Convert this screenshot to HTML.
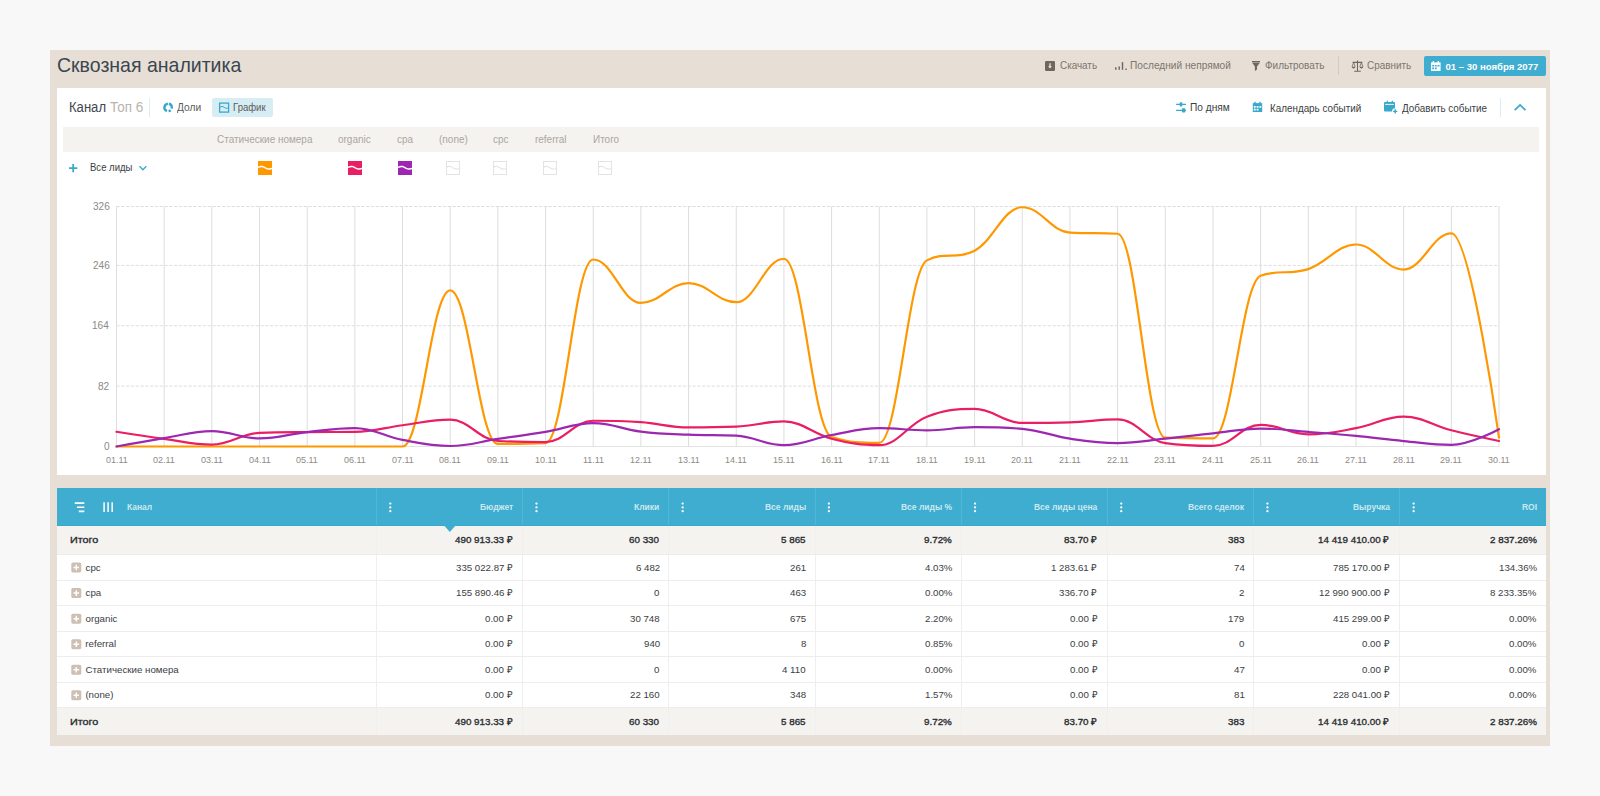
<!DOCTYPE html>
<html><head><meta charset="utf-8"><style>
html,body{margin:0;padding:0}
body{width:1600px;height:796px;background:#f8f8f8;position:relative;overflow:hidden;font-family:'Liberation Sans', sans-serif}
.t{position:absolute;white-space:nowrap}
.r{position:absolute}
</style></head><body>
<div class="r" style="left:50px;top:50px;width:1500.00px;height:695.50px;background:#e7dfd6;"></div>
<div class="t" style="left:56.77px;top:55.70px;font-size:19.767px;line-height:19.767px;color:#3b4651;font-weight:400;transform:scaleX(0.9875);transform-origin:0 0;">Сквозная аналитика</div>
<svg class="r" style="left:1045px;top:61px" width="11" height="11" viewBox="0 0 11 11"><g transform="translate(0.000 0.000)"><rect x="0" y="0" width="10" height="10" rx="1.3" fill="#6f675f"/><path d="M5 2.3v4" stroke="#e7dfd6" stroke-width="1.4"/><path d="M2.9 5.3L5 7.6L7.1 5.3z" fill="#e7dfd6"/></g></svg>
<div class="t" style="left:1059.51px;top:60.98px;font-size:10.029px;line-height:10.029px;color:#7d756e;font-weight:400;transform:scaleX(0.9862);transform-origin:0 0;">Скачать</div>
<svg class="r" style="left:1114px;top:61px" width="15" height="11" viewBox="0 0 15 11"><g transform="translate(0.000 0.000)"><rect x="1.1" y="6.2" width="1.4" height="2.6" fill="#6f675f"/><rect x="4.5" y="5.4" width="1.4" height="3.4" fill="#6f675f"/><rect x="7.8" y="1.1" width="1.4" height="7.7" fill="#6f675f"/><rect x="11.2" y="7.6" width="1.7" height="1.2" fill="#6f675f"/></g></svg>
<div class="t" style="left:1130.19px;top:60.98px;font-size:10.029px;line-height:10.029px;color:#7d756e;font-weight:400;transform:scaleX(1.0111);transform-origin:0 0;">Последний непрямой</div>
<svg class="r" style="left:1251px;top:60px" width="11" height="13" viewBox="0 0 11 13"><g transform="translate(0.000 0.000)"><rect x="1" y="1" width="8" height="1.1" fill="#6f675f"/><path d="M1 2.6H9L6 6.4V9.5L3.9 11V6.4z" fill="#6f675f"/></g></svg>
<div class="t" style="left:1265.22px;top:60.98px;font-size:10.029px;line-height:10.029px;color:#7d756e;font-weight:400;transform:scaleX(0.9971);transform-origin:0 0;">Фильтровать</div>
<div class="r" style="left:1338px;top:56px;width:1.00px;height:19.00px;background:#d6cabe;"></div>
<svg class="r" style="left:1351px;top:60px" width="14" height="13" viewBox="0 0 14 13"><g transform="translate(0.000 0.000)"><path d="M6.5 0.6v10.2M3.2 11.2h6.6M1.6 2.4h9.8" stroke="#6f675f" stroke-width="1.1" fill="none"/><path d="M2.6 2.6L1 6.8M2.6 2.6L4.2 6.8M10.4 2.6L8.8 6.8M10.4 2.6L12 6.8" stroke="#6f675f" stroke-width="0.8" fill="none"/><path d="M0.8 6.8h3.6a1.8 1.7 0 0 1-3.6 0zM8.6 6.8h3.6a1.8 1.7 0 0 1-3.6 0z" fill="#6f675f"/></g></svg>
<div class="t" style="left:1366.50px;top:60.98px;font-size:10.029px;line-height:10.029px;color:#7d756e;font-weight:400;transform:scaleX(0.9891);transform-origin:0 0;">Сравнить</div>
<div class="r" style="left:1424px;top:56px;width:122.00px;height:19.50px;background:#3eadcf;border-radius:2px;"></div>
<svg class="r" style="left:1431px;top:61px" width="11" height="11" viewBox="0 0 11 11"><g transform="translate(0.000 0.000)"><path d="M0 1.4h9.6V10H0z" fill="#fff"/><path d="M2.3 0v2.4M7.3 0v2.4" stroke="#fff" stroke-width="1.3"/><path d="M1.2 3.9h2v1.7h-2zM4 3.9h1.7v1.7H4zM6.5 3.9h2v1.7h-2zM1.2 6.6h2v1.7h-2zM4 6.6h1.7v1.7H4z" fill="#3eadcf"/></g></svg>
<div class="t" style="left:1445.42px;top:62.35px;font-size:9.593px;line-height:9.593px;color:#ffffff;font-weight:700;">01 – 30 ноября 2077</div>
<div class="r" style="left:57px;top:88px;width:1489.00px;height:387.00px;background:#ffffff;"></div>
<div class="t" style="left:69.22px;top:100.64px;font-size:13.953px;line-height:13.953px;color:#3f4750;font-weight:400;transform:scaleX(0.9386);transform-origin:0 0;">Канал</div>
<div class="t" style="left:109.90px;top:100.64px;font-size:13.953px;line-height:13.953px;color:#b8b3ae;font-weight:400;transform:scaleX(0.9655);transform-origin:0 0;">Топ 6</div>
<div class="r" style="left:149px;top:98px;width:1.00px;height:19.00px;background:#dbedf3;"></div>
<svg class="r" style="left:162px;top:102px" width="13" height="12" viewBox="0 0 13 12"><g transform="translate(0.500 0.000)"><circle cx="5.6" cy="5.4" r="3.7" stroke="#3aa9c9" stroke-width="2.4" fill="none" stroke-dasharray="6.15 1.6 2.28 1.6 10.03 1.6" stroke-dashoffset="-0.8" transform="rotate(-90 5.6 5.4)"/></g></svg>
<div class="t" style="left:177.42px;top:101.74px;font-size:11.483px;line-height:11.483px;color:#5b5b5b;font-weight:400;transform:scaleX(0.8899);transform-origin:0 0;">Доли</div>
<div class="r" style="left:212px;top:98px;width:60.50px;height:18.70px;background:#d7edf4;border-radius:2px;"></div>
<svg class="r" style="left:218px;top:102px" width="13" height="12" viewBox="0 0 13 12"><g transform="translate(0.500 0.000)"><rect x="1.1" y="1.1" width="9" height="9" stroke="#3aa9c9" stroke-width="1.3" fill="none"/><path d="M1.4 5.5C3 4 4.2 4.3 5.6 5.3S8.5 6.8 9.8 5.6" stroke="#3aa9c9" stroke-width="1" fill="none"/></g></svg>
<div class="t" style="left:232.61px;top:101.74px;font-size:11.483px;line-height:11.483px;color:#5b5b5b;font-weight:400;transform:scaleX(0.8318);transform-origin:0 0;">График</div>
<svg class="r" style="left:1175px;top:102px" width="13" height="12" viewBox="0 0 13 12"><g transform="translate(0.500 0.000)"><path d="M0.6 2.4h10M0.6 8.4h10" stroke="#3aa9c9" stroke-width="1.1"/><rect x="4.2" y="0.3" width="2.6" height="4.2" rx="0.8" fill="#3aa9c9"/><rect x="6.4" y="6.3" width="3.4" height="4.2" rx="0.8" fill="#3aa9c9"/></g></svg>
<div class="t" style="left:1189.79px;top:101.86px;font-size:11.337px;line-height:11.337px;color:#3a3e42;font-weight:400;transform:scaleX(0.8943);transform-origin:0 0;">По дням</div>
<svg class="r" style="left:1252px;top:101px" width="12" height="13" viewBox="0 0 12 13"><g transform="translate(0.500 0.500)"><path d="M0.3 1.6h9.4V10.5H0.3z" fill="#3aa9c9"/><path d="M2.5 0.2v2.6M7.5 0.2v2.6" stroke="#3aa9c9" stroke-width="1.4"/><path d="M1.3 4.4h1.9v1.8H1.3zM4.1 4.4h1.9v1.8H4.1zM6.9 4.4h1.9v1.8H6.9zM1.3 7.3h1.9v1.8H1.3zM4.1 7.3h1.9v1.8H4.1z" fill="#fff"/></g></svg>
<div class="t" style="left:1270.19px;top:102.86px;font-size:11.337px;line-height:11.337px;color:#3a3e42;font-weight:400;transform:scaleX(0.8697);transform-origin:0 0;">Календарь событий</div>
<svg class="r" style="left:1383px;top:100px" width="17" height="16" viewBox="0 0 17 16"><g transform="translate(0.500 0.500)"><rect x="0.5" y="1.6" width="11" height="9.5" rx="1" fill="#3aa9c9"/><path d="M3.8 0.3v2.4M8.8 0.3v2.4" stroke="#3aa9c9" stroke-width="1.3"/><path d="M1.6 3.9h8.8" stroke="#fff" stroke-width="0.9"/><circle cx="11.7" cy="10.9" r="3.1" fill="#fff"/><path d="M11.7 8.8v4.2M9.6 10.9h4.2" stroke="#3aa9c9" stroke-width="1.4"/></g></svg>
<div class="t" style="left:1402.33px;top:102.74px;font-size:11.483px;line-height:11.483px;color:#3a3e42;font-weight:400;transform:scaleX(0.8590);transform-origin:0 0;">Добавить событие</div>
<div class="r" style="left:1500px;top:98px;width:1.00px;height:18.50px;background:#dbedf3;"></div>
<svg class="r" style="left:1513px;top:102px" width="15" height="11" viewBox="0 0 15 11"><g transform="translate(0.000 0.000)"><path d="M1.7 8.2L7.1 2.9L12.5 8.2" stroke="#3aa9c9" stroke-width="1.8" fill="none"/></g></svg>
<div class="r" style="left:63px;top:127px;width:1476.00px;height:25.00px;background:#f5f3ef;"></div>
<div class="t" style="left:217.00px;top:134.23px;font-size:10.901px;line-height:10.901px;color:#aaa6a1;font-weight:400;transform:scaleX(0.9135);transform-origin:0 0;">Статические номера</div>
<div class="t" style="left:338.49px;top:134.23px;font-size:10.901px;line-height:10.901px;color:#aaa6a1;font-weight:400;transform:scaleX(0.9135);transform-origin:0 0;">organic</div>
<div class="t" style="left:397.07px;top:134.23px;font-size:10.901px;line-height:10.901px;color:#aaa6a1;font-weight:400;transform:scaleX(0.9135);transform-origin:0 0;">cpa</div>
<div class="t" style="left:438.96px;top:134.23px;font-size:10.901px;line-height:10.901px;color:#aaa6a1;font-weight:400;transform:scaleX(0.9135);transform-origin:0 0;">(none)</div>
<div class="t" style="left:492.93px;top:134.23px;font-size:10.901px;line-height:10.901px;color:#aaa6a1;font-weight:400;transform:scaleX(0.9135);transform-origin:0 0;">cpc</div>
<div class="t" style="left:534.88px;top:134.23px;font-size:10.901px;line-height:10.901px;color:#aaa6a1;font-weight:400;transform:scaleX(0.9135);transform-origin:0 0;">referral</div>
<div class="t" style="left:592.64px;top:134.23px;font-size:10.901px;line-height:10.901px;color:#aaa6a1;font-weight:400;transform:scaleX(0.9135);transform-origin:0 0;">Итого</div>
<svg class="r" style="left:258px;top:161px" width="15" height="15" viewBox="0 0 15 15"><g transform="translate(0.000 0.000)"><rect width="14" height="14" fill="#ff9800"/><path d="M0 6.3C1.5 5.6 3 5.3 4.3 5.5C6.5 5.9 7.8 8.1 10.3 8.1C11.8 8.1 13 7.7 14 7.4" stroke="#fff" stroke-width="1.5" fill="none"/></g></svg>
<svg class="r" style="left:348px;top:161px" width="15" height="15" viewBox="0 0 15 15"><g transform="translate(0.000 0.000)"><rect width="14" height="14" fill="#e91e63"/><path d="M0 6.3C1.5 5.6 3 5.3 4.3 5.5C6.5 5.9 7.8 8.1 10.3 8.1C11.8 8.1 13 7.7 14 7.4" stroke="#fff" stroke-width="1.5" fill="none"/></g></svg>
<svg class="r" style="left:398px;top:161px" width="15" height="15" viewBox="0 0 15 15"><g transform="translate(0.000 0.000)"><rect width="14" height="14" fill="#9c27b0"/><path d="M0 6.3C1.5 5.6 3 5.3 4.3 5.5C6.5 5.9 7.8 8.1 10.3 8.1C11.8 8.1 13 7.7 14 7.4" stroke="#fff" stroke-width="1.5" fill="none"/></g></svg>
<svg class="r" style="left:446px;top:161px" width="15" height="15" viewBox="0 0 15 15"><g transform="translate(0.000 0.000)"><rect x="0.5" y="0.5" width="13" height="13" fill="none" stroke="#e3e3e3" stroke-width="1"/><path d="M0.5 6.3C1.5 5.6 3 5.3 4.3 5.5C6.5 5.9 7.8 8.1 10.3 8.1C11.8 8.1 13 7.7 13.5 7.4" stroke="#e3e3e3" stroke-width="1.1" fill="none"/></g></svg>
<svg class="r" style="left:493px;top:161px" width="15" height="15" viewBox="0 0 15 15"><g transform="translate(0.000 0.000)"><rect x="0.5" y="0.5" width="13" height="13" fill="none" stroke="#e3e3e3" stroke-width="1"/><path d="M0.5 6.3C1.5 5.6 3 5.3 4.3 5.5C6.5 5.9 7.8 8.1 10.3 8.1C11.8 8.1 13 7.7 13.5 7.4" stroke="#e3e3e3" stroke-width="1.1" fill="none"/></g></svg>
<svg class="r" style="left:543px;top:161px" width="15" height="15" viewBox="0 0 15 15"><g transform="translate(0.000 0.000)"><rect x="0.5" y="0.5" width="13" height="13" fill="none" stroke="#e3e3e3" stroke-width="1"/><path d="M0.5 6.3C1.5 5.6 3 5.3 4.3 5.5C6.5 5.9 7.8 8.1 10.3 8.1C11.8 8.1 13 7.7 13.5 7.4" stroke="#e3e3e3" stroke-width="1.1" fill="none"/></g></svg>
<svg class="r" style="left:598px;top:161px" width="15" height="15" viewBox="0 0 15 15"><g transform="translate(0.000 0.000)"><rect x="0.5" y="0.5" width="13" height="13" fill="none" stroke="#e3e3e3" stroke-width="1"/><path d="M0.5 6.3C1.5 5.6 3 5.3 4.3 5.5C6.5 5.9 7.8 8.1 10.3 8.1C11.8 8.1 13 7.7 13.5 7.4" stroke="#e3e3e3" stroke-width="1.1" fill="none"/></g></svg>
<svg class="r" style="left:69px;top:164px" width="10" height="10" viewBox="0 0 10 10"><g transform="translate(0.000 0.000)"><path d="M4.2 0v8.3M0 4.15h8.3" stroke="#3aa9c9" stroke-width="1.8"/></g></svg>
<div class="t" style="left:90.21px;top:162.36px;font-size:10.756px;line-height:10.756px;color:#3a3e42;font-weight:400;transform:scaleX(0.8875);transform-origin:0 0;">Все лиды</div>
<svg class="r" style="left:138px;top:165px" width="11" height="8" viewBox="0 0 11 8"><g transform="translate(0.500 0.300)"><path d="M1 1L4.4 4.4L7.8 1" stroke="#3aa9c9" stroke-width="1.4" fill="none"/></g></svg>
<svg class="r" style="left:0;top:0" width="1600" height="796" viewBox="0 0 1600 796"><path d="M116.5 206.50H1499.5" stroke="#dedede" stroke-width="1" stroke-dasharray="3.2 1.6"/><path d="M116.5 265.40H1499.5" stroke="#dedede" stroke-width="1" stroke-dasharray="3.2 1.6"/><path d="M116.5 325.76H1499.5" stroke="#dedede" stroke-width="1" stroke-dasharray="3.2 1.6"/><path d="M116.5 386.13H1499.5" stroke="#dedede" stroke-width="1" stroke-dasharray="3.2 1.6"/><path d="M116.50 206.50V446.00" stroke="#dddddd" stroke-width="1"/><path d="M164.17 206.50V446.00" stroke="#dddddd" stroke-width="1"/><path d="M211.84 206.50V446.00" stroke="#dddddd" stroke-width="1"/><path d="M259.52 206.50V446.00" stroke="#dddddd" stroke-width="1"/><path d="M307.19 206.50V446.00" stroke="#dddddd" stroke-width="1"/><path d="M354.86 206.50V446.00" stroke="#dddddd" stroke-width="1"/><path d="M402.53 206.50V446.00" stroke="#dddddd" stroke-width="1"/><path d="M450.21 206.50V446.00" stroke="#dddddd" stroke-width="1"/><path d="M497.88 206.50V446.00" stroke="#dddddd" stroke-width="1"/><path d="M545.55 206.50V446.00" stroke="#dddddd" stroke-width="1"/><path d="M593.22 206.50V446.00" stroke="#dddddd" stroke-width="1"/><path d="M640.90 206.50V446.00" stroke="#dddddd" stroke-width="1"/><path d="M688.57 206.50V446.00" stroke="#dddddd" stroke-width="1"/><path d="M736.24 206.50V446.00" stroke="#dddddd" stroke-width="1"/><path d="M783.91 206.50V446.00" stroke="#dddddd" stroke-width="1"/><path d="M831.59 206.50V446.00" stroke="#dddddd" stroke-width="1"/><path d="M879.26 206.50V446.00" stroke="#dddddd" stroke-width="1"/><path d="M926.93 206.50V446.00" stroke="#dddddd" stroke-width="1"/><path d="M974.60 206.50V446.00" stroke="#dddddd" stroke-width="1"/><path d="M1022.28 206.50V446.00" stroke="#dddddd" stroke-width="1"/><path d="M1069.95 206.50V446.00" stroke="#dddddd" stroke-width="1"/><path d="M1117.62 206.50V446.00" stroke="#dddddd" stroke-width="1"/><path d="M1165.29 206.50V446.00" stroke="#dddddd" stroke-width="1"/><path d="M1212.97 206.50V446.00" stroke="#dddddd" stroke-width="1"/><path d="M1260.64 206.50V446.00" stroke="#dddddd" stroke-width="1"/><path d="M1308.31 206.50V446.00" stroke="#dddddd" stroke-width="1"/><path d="M1355.98 206.50V446.00" stroke="#dddddd" stroke-width="1"/><path d="M1403.66 206.50V446.00" stroke="#dddddd" stroke-width="1"/><path d="M1451.33 206.50V446.00" stroke="#dddddd" stroke-width="1"/><path d="M1499.00 206.50V446.00" stroke="#dddddd" stroke-width="1"/><path d="M116 446.5H1499.5" stroke="#e3e3e3" stroke-width="1"/></svg>
<div class="t" style="left:92.52px;top:201.11px;font-size:11.047px;line-height:11.047px;color:#8e8984;font-weight:400;transform:scaleX(0.9124);transform-origin:0 0;">326</div>
<div class="t" style="left:92.52px;top:260.11px;font-size:11.047px;line-height:11.047px;color:#8e8984;font-weight:400;transform:scaleX(0.9124);transform-origin:0 0;">246</div>
<div class="t" style="left:92.37px;top:320.11px;font-size:11.047px;line-height:11.047px;color:#8e8984;font-weight:400;transform:scaleX(0.9124);transform-origin:0 0;">164</div>
<div class="t" style="left:98.22px;top:381.11px;font-size:11.047px;line-height:11.047px;color:#8e8984;font-weight:400;transform:scaleX(0.9124);transform-origin:0 0;">82</div>
<div class="t" style="left:103.68px;top:441.11px;font-size:11.047px;line-height:11.047px;color:#8e8984;font-weight:400;transform:scaleX(0.9124);transform-origin:0 0;">0</div>
<div class="t" style="left:105.64px;top:455.16px;font-size:9.811px;line-height:9.811px;color:#8e8984;font-weight:400;transform:scaleX(0.9147);transform-origin:0 0;">01.11</div>
<div class="t" style="left:153.31px;top:455.16px;font-size:9.811px;line-height:9.811px;color:#8e8984;font-weight:400;transform:scaleX(0.9147);transform-origin:0 0;">02.11</div>
<div class="t" style="left:200.99px;top:455.16px;font-size:9.811px;line-height:9.811px;color:#8e8984;font-weight:400;transform:scaleX(0.9147);transform-origin:0 0;">03.11</div>
<div class="t" style="left:248.66px;top:455.16px;font-size:9.811px;line-height:9.811px;color:#8e8984;font-weight:400;transform:scaleX(0.9147);transform-origin:0 0;">04.11</div>
<div class="t" style="left:296.33px;top:455.16px;font-size:9.811px;line-height:9.811px;color:#8e8984;font-weight:400;transform:scaleX(0.9147);transform-origin:0 0;">05.11</div>
<div class="t" style="left:344.00px;top:455.16px;font-size:9.811px;line-height:9.811px;color:#8e8984;font-weight:400;transform:scaleX(0.9147);transform-origin:0 0;">06.11</div>
<div class="t" style="left:391.68px;top:455.16px;font-size:9.811px;line-height:9.811px;color:#8e8984;font-weight:400;transform:scaleX(0.9147);transform-origin:0 0;">07.11</div>
<div class="t" style="left:439.35px;top:455.16px;font-size:9.811px;line-height:9.811px;color:#8e8984;font-weight:400;transform:scaleX(0.9147);transform-origin:0 0;">08.11</div>
<div class="t" style="left:487.02px;top:455.16px;font-size:9.811px;line-height:9.811px;color:#8e8984;font-weight:400;transform:scaleX(0.9147);transform-origin:0 0;">09.11</div>
<div class="t" style="left:534.54px;top:455.16px;font-size:9.811px;line-height:9.811px;color:#8e8984;font-weight:400;transform:scaleX(0.9147);transform-origin:0 0;">10.11</div>
<div class="t" style="left:582.54px;top:455.16px;font-size:9.811px;line-height:9.811px;color:#8e8984;font-weight:400;transform:scaleX(0.9147);transform-origin:0 0;">11.11</div>
<div class="t" style="left:629.88px;top:455.16px;font-size:9.811px;line-height:9.811px;color:#8e8984;font-weight:400;transform:scaleX(0.9147);transform-origin:0 0;">12.11</div>
<div class="t" style="left:677.55px;top:455.16px;font-size:9.811px;line-height:9.811px;color:#8e8984;font-weight:400;transform:scaleX(0.9147);transform-origin:0 0;">13.11</div>
<div class="t" style="left:725.23px;top:455.16px;font-size:9.811px;line-height:9.811px;color:#8e8984;font-weight:400;transform:scaleX(0.9147);transform-origin:0 0;">14.11</div>
<div class="t" style="left:772.90px;top:455.16px;font-size:9.811px;line-height:9.811px;color:#8e8984;font-weight:400;transform:scaleX(0.9147);transform-origin:0 0;">15.11</div>
<div class="t" style="left:820.57px;top:455.16px;font-size:9.811px;line-height:9.811px;color:#8e8984;font-weight:400;transform:scaleX(0.9147);transform-origin:0 0;">16.11</div>
<div class="t" style="left:868.24px;top:455.16px;font-size:9.811px;line-height:9.811px;color:#8e8984;font-weight:400;transform:scaleX(0.9147);transform-origin:0 0;">17.11</div>
<div class="t" style="left:915.92px;top:455.16px;font-size:9.811px;line-height:9.811px;color:#8e8984;font-weight:400;transform:scaleX(0.9147);transform-origin:0 0;">18.11</div>
<div class="t" style="left:963.59px;top:455.16px;font-size:9.811px;line-height:9.811px;color:#8e8984;font-weight:400;transform:scaleX(0.9147);transform-origin:0 0;">19.11</div>
<div class="t" style="left:1011.37px;top:455.16px;font-size:9.811px;line-height:9.811px;color:#8e8984;font-weight:400;transform:scaleX(0.9147);transform-origin:0 0;">20.11</div>
<div class="t" style="left:1059.04px;top:455.16px;font-size:9.811px;line-height:9.811px;color:#8e8984;font-weight:400;transform:scaleX(0.9147);transform-origin:0 0;">21.11</div>
<div class="t" style="left:1106.72px;top:455.16px;font-size:9.811px;line-height:9.811px;color:#8e8984;font-weight:400;transform:scaleX(0.9147);transform-origin:0 0;">22.11</div>
<div class="t" style="left:1154.39px;top:455.16px;font-size:9.811px;line-height:9.811px;color:#8e8984;font-weight:400;transform:scaleX(0.9147);transform-origin:0 0;">23.11</div>
<div class="t" style="left:1202.06px;top:455.16px;font-size:9.811px;line-height:9.811px;color:#8e8984;font-weight:400;transform:scaleX(0.9147);transform-origin:0 0;">24.11</div>
<div class="t" style="left:1249.73px;top:455.16px;font-size:9.811px;line-height:9.811px;color:#8e8984;font-weight:400;transform:scaleX(0.9147);transform-origin:0 0;">25.11</div>
<div class="t" style="left:1297.41px;top:455.16px;font-size:9.811px;line-height:9.811px;color:#8e8984;font-weight:400;transform:scaleX(0.9147);transform-origin:0 0;">26.11</div>
<div class="t" style="left:1345.08px;top:455.16px;font-size:9.811px;line-height:9.811px;color:#8e8984;font-weight:400;transform:scaleX(0.9147);transform-origin:0 0;">27.11</div>
<div class="t" style="left:1392.75px;top:455.16px;font-size:9.811px;line-height:9.811px;color:#8e8984;font-weight:400;transform:scaleX(0.9147);transform-origin:0 0;">28.11</div>
<div class="t" style="left:1440.42px;top:455.16px;font-size:9.811px;line-height:9.811px;color:#8e8984;font-weight:400;transform:scaleX(0.9147);transform-origin:0 0;">29.11</div>
<div class="t" style="left:1488.15px;top:455.16px;font-size:9.811px;line-height:9.811px;color:#8e8984;font-weight:400;transform:scaleX(0.9147);transform-origin:0 0;">30.11</div>
<svg class="r" style="left:0;top:0" width="1600" height="796" viewBox="0 0 1600 796"><path d="M116.50 446.50 C116.50 446.50 145.10 446.50 164.17 446.50 C183.24 446.50 192.78 446.50 211.84 446.50 C230.91 446.50 240.45 446.50 259.52 446.50 C278.59 446.50 288.12 446.50 307.19 446.50 C326.26 446.50 335.79 446.50 354.86 446.50 C373.93 446.50 383.47 446.50 402.53 446.50 C421.60 446.50 431.14 290.43 450.21 290.43 C469.28 290.43 478.81 443.92 497.88 443.92 C516.95 443.92 526.48 443.92 545.55 443.11 C564.62 442.30 574.16 259.51 593.22 259.51 C612.29 259.51 621.83 302.94 640.90 302.94 C659.97 302.94 669.50 283.06 688.57 283.06 C707.64 283.06 717.17 302.21 736.24 302.21 C755.31 302.21 764.84 258.77 783.91 258.77 C802.98 258.77 812.52 431.04 831.59 436.93 C850.66 442.82 860.19 442.82 879.26 442.82 C898.33 442.82 907.86 270.11 926.93 260.39 C946.00 250.67 955.53 260.39 974.60 250.67 C993.67 240.95 1003.21 207.24 1022.28 207.24 C1041.34 207.24 1050.88 231.53 1069.95 232.63 C1089.02 233.74 1098.55 232.63 1117.62 233.74 C1136.69 234.84 1146.22 436.93 1165.29 437.67 C1184.36 438.40 1193.90 438.40 1212.97 438.40 C1232.03 438.40 1241.57 282.33 1260.64 275.70 C1279.71 269.08 1289.24 275.32 1308.31 269.08 C1327.38 262.83 1336.91 244.49 1355.98 244.49 C1375.05 244.49 1384.59 269.59 1403.66 269.59 C1422.72 269.59 1432.26 233.30 1451.33 233.30 C1470.40 233.30 1499.00 437.67 1499.00 437.67" stroke="#ff9800" stroke-width="2.2" fill="none" stroke-linejoin="round" stroke-linecap="round"/><path d="M116.50 431.78 C116.50 431.78 145.10 436.34 164.17 438.92 C183.24 441.49 192.78 444.66 211.84 444.66 C230.91 444.66 240.45 433.69 259.52 432.88 C278.59 432.07 288.12 432.22 307.19 432.07 C326.26 431.92 335.79 432.07 354.86 431.92 C373.93 431.78 383.47 427.67 402.53 425.22 C421.60 422.78 431.14 419.70 450.21 419.70 C469.28 419.70 478.81 439.87 497.88 440.98 C516.95 442.08 526.48 442.08 545.55 442.08 C564.62 442.08 574.16 420.73 593.22 420.73 C612.29 420.73 621.83 420.88 640.90 422.21 C659.97 423.53 669.50 427.36 688.57 427.36 C707.64 427.36 717.17 427.36 736.24 426.62 C755.31 425.89 764.84 421.47 783.91 421.47 C802.98 421.47 812.52 433.96 831.59 438.70 C850.66 443.44 860.19 445.17 879.26 445.17 C898.33 445.17 907.86 423.93 926.93 416.68 C946.00 409.44 955.53 408.95 974.60 408.95 C993.67 408.95 1003.21 422.94 1022.28 422.94 C1041.34 422.94 1050.88 422.94 1069.95 422.43 C1089.02 421.91 1098.55 419.41 1117.62 419.41 C1136.69 419.41 1146.22 440.32 1165.29 443.11 C1184.36 445.91 1193.90 445.91 1212.97 445.91 C1232.03 445.91 1241.57 424.78 1260.64 424.78 C1279.71 424.78 1289.24 434.35 1308.31 434.35 C1327.38 434.35 1336.91 431.70 1355.98 428.17 C1375.05 424.63 1384.59 416.68 1403.66 416.68 C1422.72 416.68 1432.26 425.44 1451.33 430.30 C1470.40 435.16 1499.00 440.98 1499.00 440.98" stroke="#e91e63" stroke-width="2.2" fill="none" stroke-linejoin="round" stroke-linecap="round"/><path d="M116.50 446.50 C116.50 446.50 145.10 441.20 164.17 438.11 C183.24 435.02 192.78 431.04 211.84 431.04 C230.91 431.04 240.45 438.40 259.52 438.40 C278.59 438.40 288.12 434.13 307.19 432.07 C326.26 430.01 335.79 428.10 354.86 428.10 C373.93 428.10 383.47 436.37 402.53 439.95 C421.60 443.53 431.14 445.98 450.21 445.98 C469.28 445.98 478.81 441.73 497.88 438.92 C516.95 436.10 526.48 435.09 545.55 431.92 C564.62 428.76 574.16 423.09 593.22 423.09 C612.29 423.09 621.83 429.23 640.90 431.56 C659.97 433.88 669.50 433.90 688.57 434.72 C707.64 435.55 717.17 434.72 736.24 435.68 C755.31 436.63 764.84 445.17 783.91 445.17 C802.98 445.17 812.52 438.42 831.59 435.02 C850.66 431.61 860.19 428.17 879.26 428.17 C898.33 428.17 907.86 430.30 926.93 430.30 C946.00 430.30 955.53 427.21 974.60 427.21 C993.67 427.21 1003.21 427.21 1022.28 428.83 C1041.34 430.45 1050.88 435.84 1069.95 438.70 C1089.02 441.55 1098.55 443.11 1117.62 443.11 C1136.69 443.11 1146.22 440.65 1165.29 438.70 C1184.36 436.74 1193.90 435.35 1212.97 433.32 C1232.03 431.29 1241.57 428.54 1260.64 428.54 C1279.71 428.54 1289.24 430.44 1308.31 431.92 C1327.38 433.41 1336.91 434.15 1355.98 435.97 C1375.05 437.80 1384.59 439.29 1403.66 441.05 C1422.72 442.82 1432.26 444.81 1451.33 444.81 C1470.40 444.81 1499.00 429.20 1499.00 429.20" stroke="#9c27b0" stroke-width="2.2" fill="none" stroke-linejoin="round" stroke-linecap="round"/></svg>
<div class="r" style="left:57px;top:488px;width:1489.00px;height:38.00px;background:#3eadcf;"></div>
<div class="r" style="left:57px;top:525px;width:1489.00px;height:1.00px;background:#36aacd;"></div>
<div class="t" style="left:127.23px;top:502.35px;font-size:9.593px;line-height:9.593px;color:#cbe8f1;font-weight:700;transform:scaleX(0.8854);transform-origin:0 0;">Канал</div>
<div class="r" style="left:376.0px;top:488px;width:1.00px;height:37.00px;background:#52b7d4;"></div>
<svg class="r" style="left:388px;top:502px" width="5" height="12" viewBox="0 0 5 12"><g transform="translate(0.800 0.000)"><circle cx="1.5" cy="1.6" r="1.15" fill="#fff"/><circle cx="1.5" cy="5.4" r="1.15" fill="#fff"/><circle cx="1.5" cy="9.2" r="1.15" fill="#fff"/></g></svg>
<div class="t" style="left:479.81px;top:502.35px;font-size:9.593px;line-height:9.593px;color:#cbe8f1;font-weight:700;transform:scaleX(0.8854);transform-origin:0 0;">Бюджет</div>
<div class="r" style="left:522.19px;top:488px;width:1.00px;height:37.00px;background:#52b7d4;"></div>
<svg class="r" style="left:534px;top:502px" width="5" height="12" viewBox="0 0 5 12"><g transform="translate(0.990 0.000)"><circle cx="1.5" cy="1.6" r="1.15" fill="#fff"/><circle cx="1.5" cy="5.4" r="1.15" fill="#fff"/><circle cx="1.5" cy="9.2" r="1.15" fill="#fff"/></g></svg>
<div class="t" style="left:634.41px;top:502.35px;font-size:9.593px;line-height:9.593px;color:#cbe8f1;font-weight:700;transform:scaleX(0.8854);transform-origin:0 0;">Клики</div>
<div class="r" style="left:668.38px;top:488px;width:1.00px;height:37.00px;background:#52b7d4;"></div>
<svg class="r" style="left:681px;top:502px" width="5" height="12" viewBox="0 0 5 12"><g transform="translate(0.180 0.000)"><circle cx="1.5" cy="1.6" r="1.15" fill="#fff"/><circle cx="1.5" cy="5.4" r="1.15" fill="#fff"/><circle cx="1.5" cy="9.2" r="1.15" fill="#fff"/></g></svg>
<div class="t" style="left:764.65px;top:502.35px;font-size:9.593px;line-height:9.593px;color:#cbe8f1;font-weight:700;transform:scaleX(0.8854);transform-origin:0 0;">Все лиды</div>
<div class="r" style="left:814.5699999999999px;top:488px;width:1.00px;height:37.00px;background:#52b7d4;"></div>
<svg class="r" style="left:827px;top:502px" width="5" height="12" viewBox="0 0 5 12"><g transform="translate(0.370 0.000)"><circle cx="1.5" cy="1.6" r="1.15" fill="#fff"/><circle cx="1.5" cy="5.4" r="1.15" fill="#fff"/><circle cx="1.5" cy="9.2" r="1.15" fill="#fff"/></g></svg>
<div class="t" style="left:900.56px;top:502.35px;font-size:9.593px;line-height:9.593px;color:#cbe8f1;font-weight:700;transform:scaleX(0.8854);transform-origin:0 0;">Все лиды %</div>
<div class="r" style="left:960.76px;top:488px;width:1.00px;height:37.00px;background:#52b7d4;"></div>
<svg class="r" style="left:973px;top:502px" width="5" height="12" viewBox="0 0 5 12"><g transform="translate(0.560 0.000)"><circle cx="1.5" cy="1.6" r="1.15" fill="#fff"/><circle cx="1.5" cy="5.4" r="1.15" fill="#fff"/><circle cx="1.5" cy="9.2" r="1.15" fill="#fff"/></g></svg>
<div class="t" style="left:1034.23px;top:502.35px;font-size:9.593px;line-height:9.593px;color:#cbe8f1;font-weight:700;transform:scaleX(0.8854);transform-origin:0 0;">Все лиды цена</div>
<div class="r" style="left:1106.95px;top:488px;width:1.00px;height:37.00px;background:#52b7d4;"></div>
<svg class="r" style="left:1119px;top:502px" width="5" height="12" viewBox="0 0 5 12"><g transform="translate(0.750 0.000)"><circle cx="1.5" cy="1.6" r="1.15" fill="#fff"/><circle cx="1.5" cy="5.4" r="1.15" fill="#fff"/><circle cx="1.5" cy="9.2" r="1.15" fill="#fff"/></g></svg>
<div class="t" style="left:1187.72px;top:502.35px;font-size:9.593px;line-height:9.593px;color:#cbe8f1;font-weight:700;transform:scaleX(0.8854);transform-origin:0 0;">Всего сделок</div>
<div class="r" style="left:1253.1399999999999px;top:488px;width:1.00px;height:37.00px;background:#52b7d4;"></div>
<svg class="r" style="left:1265px;top:502px" width="5" height="12" viewBox="0 0 5 12"><g transform="translate(0.940 0.000)"><circle cx="1.5" cy="1.6" r="1.15" fill="#fff"/><circle cx="1.5" cy="5.4" r="1.15" fill="#fff"/><circle cx="1.5" cy="9.2" r="1.15" fill="#fff"/></g></svg>
<div class="t" style="left:1352.89px;top:502.35px;font-size:9.593px;line-height:9.593px;color:#cbe8f1;font-weight:700;transform:scaleX(0.8854);transform-origin:0 0;">Выручка</div>
<div class="r" style="left:1399.33px;top:488px;width:1.00px;height:37.00px;background:#52b7d4;"></div>
<svg class="r" style="left:1412px;top:502px" width="5" height="12" viewBox="0 0 5 12"><g transform="translate(0.130 0.000)"><circle cx="1.5" cy="1.6" r="1.15" fill="#fff"/><circle cx="1.5" cy="5.4" r="1.15" fill="#fff"/><circle cx="1.5" cy="9.2" r="1.15" fill="#fff"/></g></svg>
<div class="t" style="left:1521.68px;top:502.35px;font-size:9.593px;line-height:9.593px;color:#cbe8f1;font-weight:700;transform:scaleX(0.8854);transform-origin:0 0;">ROI</div>
<svg class="r" style="left:74px;top:501px" width="13" height="14" viewBox="0 0 13 14"><g transform="translate(0.000 0.500)"><path d="M0.75 1.6h9.6M2.9 5.8h7.45M4.75 9.9h5.6" stroke="#fff" stroke-width="1.6"/></g></svg>
<svg class="r" style="left:102px;top:501px" width="13" height="14" viewBox="0 0 13 14"><g transform="translate(0.000 0.500)"><path d="M2.1 0.7v9.7M6.1 0.7v9.7M10.2 0.7v9.7" stroke="#fff" stroke-width="1.5"/></g></svg>
<div class="r" style="left:57px;top:526px;width:1489.00px;height:28.50px;background:#f5f3ef;"></div>
<div class="r" style="left:376.0px;top:526px;width:1.00px;height:28.50px;background:#efefef;"></div>
<div class="r" style="left:522.19px;top:526px;width:1.00px;height:28.50px;background:#efefef;"></div>
<div class="r" style="left:668.38px;top:526px;width:1.00px;height:28.50px;background:#efefef;"></div>
<div class="r" style="left:814.5699999999999px;top:526px;width:1.00px;height:28.50px;background:#efefef;"></div>
<div class="r" style="left:960.76px;top:526px;width:1.00px;height:28.50px;background:#efefef;"></div>
<div class="r" style="left:1106.95px;top:526px;width:1.00px;height:28.50px;background:#efefef;"></div>
<div class="r" style="left:1253.1399999999999px;top:526px;width:1.00px;height:28.50px;background:#efefef;"></div>
<div class="r" style="left:1399.33px;top:526px;width:1.00px;height:28.50px;background:#efefef;"></div>
<div class="t" style="left:69.51px;top:535.22px;font-size:9.738px;line-height:9.738px;color:#2b2f33;font-weight:400;transform:scaleX(1.1101);transform-origin:0 0;-webkit-text-stroke:0.35px #2b2f33;">Итого</div>
<div class="t" style="left:454.62px;top:535.22px;font-size:9.738px;line-height:9.738px;color:#2b2f33;font-weight:400;transform:scaleX(1.0086);transform-origin:0 0;-webkit-text-stroke:0.35px #2b2f33;">490 913.33 ₽</div>
<div class="t" style="left:629.42px;top:535.22px;font-size:9.738px;line-height:9.738px;color:#2b2f33;font-weight:400;transform:scaleX(1.0086);transform-origin:0 0;-webkit-text-stroke:0.35px #2b2f33;">60 330</div>
<div class="t" style="left:781.08px;top:535.22px;font-size:9.738px;line-height:9.738px;color:#2b2f33;font-weight:400;transform:scaleX(1.0086);transform-origin:0 0;-webkit-text-stroke:0.35px #2b2f33;">5 865</div>
<div class="t" style="left:923.96px;top:535.22px;font-size:9.738px;line-height:9.738px;color:#2b2f33;font-weight:400;transform:scaleX(1.0086);transform-origin:0 0;-webkit-text-stroke:0.35px #2b2f33;">9.72%</div>
<div class="t" style="left:1063.96px;top:535.22px;font-size:9.738px;line-height:9.738px;color:#2b2f33;font-weight:400;transform:scaleX(1.0086);transform-origin:0 0;-webkit-text-stroke:0.35px #2b2f33;">83.70 ₽</div>
<div class="t" style="left:1227.88px;top:535.22px;font-size:9.738px;line-height:9.738px;color:#2b2f33;font-weight:400;transform:scaleX(1.0086);transform-origin:0 0;-webkit-text-stroke:0.35px #2b2f33;">383</div>
<div class="t" style="left:1318.11px;top:535.22px;font-size:9.738px;line-height:9.738px;color:#2b2f33;font-weight:400;transform:scaleX(1.0086);transform-origin:0 0;-webkit-text-stroke:0.35px #2b2f33;">14 419 410.00 ₽</div>
<div class="t" style="left:1489.59px;top:535.22px;font-size:9.738px;line-height:9.738px;color:#2b2f33;font-weight:400;transform:scaleX(1.0086);transform-origin:0 0;-webkit-text-stroke:0.35px #2b2f33;">2 837.26%</div>
<div class="r" style="left:57px;top:554.5px;width:1489.00px;height:25.70px;background:#ffffff;"></div>
<div class="r" style="left:57px;top:554.0px;width:1489.00px;height:1.00px;background:#ededed;"></div>
<div class="r" style="left:376.0px;top:554.5px;width:1.00px;height:25.70px;background:#efefef;"></div>
<div class="r" style="left:522.19px;top:554.5px;width:1.00px;height:25.70px;background:#efefef;"></div>
<div class="r" style="left:668.38px;top:554.5px;width:1.00px;height:25.70px;background:#efefef;"></div>
<div class="r" style="left:814.5699999999999px;top:554.5px;width:1.00px;height:25.70px;background:#efefef;"></div>
<div class="r" style="left:960.76px;top:554.5px;width:1.00px;height:25.70px;background:#efefef;"></div>
<div class="r" style="left:1106.95px;top:554.5px;width:1.00px;height:25.70px;background:#efefef;"></div>
<div class="r" style="left:1253.1399999999999px;top:554.5px;width:1.00px;height:25.70px;background:#efefef;"></div>
<div class="r" style="left:1399.33px;top:554.5px;width:1.00px;height:25.70px;background:#efefef;"></div>
<svg class="r" style="left:71px;top:562px" width="12" height="12" viewBox="0 0 12 12"><g transform="translate(0.300 0.450)"><rect width="10" height="10" rx="1.6" fill="#cdbfb1"/><path d="M5 2.2v5.6M2.2 5h5.6" stroke="#fff" stroke-width="1.5"/></g></svg>
<div class="t" style="left:85.59px;top:563.22px;font-size:9.738px;line-height:9.738px;color:#3b3e42;font-weight:400;">cpc</div>
<div class="t" style="left:455.63px;top:563.22px;font-size:9.738px;line-height:9.738px;color:#3b3e42;font-weight:400;transform:scaleX(0.9964);transform-origin:0 0;">335 022.87 ₽</div>
<div class="t" style="left:635.58px;top:563.22px;font-size:9.738px;line-height:9.738px;color:#3b3e42;font-weight:400;transform:scaleX(0.9964);transform-origin:0 0;">6 482</div>
<div class="t" style="left:789.85px;top:563.22px;font-size:9.738px;line-height:9.738px;color:#3b3e42;font-weight:400;transform:scaleX(0.9964);transform-origin:0 0;">261</div>
<div class="t" style="left:924.59px;top:563.22px;font-size:9.738px;line-height:9.738px;color:#3b3e42;font-weight:400;transform:scaleX(0.9964);transform-origin:0 0;">4.03%</div>
<div class="t" style="left:1051.18px;top:563.22px;font-size:9.738px;line-height:9.738px;color:#3b3e42;font-weight:400;transform:scaleX(0.9964);transform-origin:0 0;">1 283.61 ₽</div>
<div class="t" style="left:1233.64px;top:563.22px;font-size:9.738px;line-height:9.738px;color:#3b3e42;font-weight:400;transform:scaleX(0.9964);transform-origin:0 0;">74</div>
<div class="t" style="left:1332.77px;top:563.22px;font-size:9.738px;line-height:9.738px;color:#3b3e42;font-weight:400;transform:scaleX(0.9964);transform-origin:0 0;">785 170.00 ₽</div>
<div class="t" style="left:1498.56px;top:563.22px;font-size:9.738px;line-height:9.738px;color:#3b3e42;font-weight:400;transform:scaleX(0.9964);transform-origin:0 0;">134.36%</div>
<div class="r" style="left:57px;top:580.2px;width:1489.00px;height:25.60px;background:#ffffff;"></div>
<div class="r" style="left:57px;top:579.7px;width:1489.00px;height:1.00px;background:#ededed;"></div>
<div class="r" style="left:376.0px;top:580.2px;width:1.00px;height:25.60px;background:#efefef;"></div>
<div class="r" style="left:522.19px;top:580.2px;width:1.00px;height:25.60px;background:#efefef;"></div>
<div class="r" style="left:668.38px;top:580.2px;width:1.00px;height:25.60px;background:#efefef;"></div>
<div class="r" style="left:814.5699999999999px;top:580.2px;width:1.00px;height:25.60px;background:#efefef;"></div>
<div class="r" style="left:960.76px;top:580.2px;width:1.00px;height:25.60px;background:#efefef;"></div>
<div class="r" style="left:1106.95px;top:580.2px;width:1.00px;height:25.60px;background:#efefef;"></div>
<div class="r" style="left:1253.1399999999999px;top:580.2px;width:1.00px;height:25.60px;background:#efefef;"></div>
<div class="r" style="left:1399.33px;top:580.2px;width:1.00px;height:25.60px;background:#efefef;"></div>
<svg class="r" style="left:71px;top:588px" width="12" height="12" viewBox="0 0 12 12"><g transform="translate(0.300 0.100)"><rect width="10" height="10" rx="1.6" fill="#cdbfb1"/><path d="M5 2.2v5.6M2.2 5h5.6" stroke="#fff" stroke-width="1.5"/></g></svg>
<div class="t" style="left:85.59px;top:588.22px;font-size:9.738px;line-height:9.738px;color:#3b3e42;font-weight:400;">cpa</div>
<div class="t" style="left:455.63px;top:588.22px;font-size:9.738px;line-height:9.738px;color:#3b3e42;font-weight:400;transform:scaleX(0.9964);transform-origin:0 0;">155 890.46 ₽</div>
<div class="t" style="left:654.36px;top:588.22px;font-size:9.738px;line-height:9.738px;color:#3b3e42;font-weight:400;transform:scaleX(0.9964);transform-origin:0 0;">0</div>
<div class="t" style="left:789.80px;top:588.22px;font-size:9.738px;line-height:9.738px;color:#3b3e42;font-weight:400;transform:scaleX(0.9964);transform-origin:0 0;">463</div>
<div class="t" style="left:924.59px;top:588.22px;font-size:9.738px;line-height:9.738px;color:#3b3e42;font-weight:400;transform:scaleX(0.9964);transform-origin:0 0;">0.00%</div>
<div class="t" style="left:1059.26px;top:588.22px;font-size:9.738px;line-height:9.738px;color:#3b3e42;font-weight:400;transform:scaleX(0.9964);transform-origin:0 0;">336.70 ₽</div>
<div class="t" style="left:1239.24px;top:588.22px;font-size:9.738px;line-height:9.738px;color:#3b3e42;font-weight:400;transform:scaleX(0.9964);transform-origin:0 0;">2</div>
<div class="t" style="left:1319.28px;top:588.22px;font-size:9.738px;line-height:9.738px;color:#3b3e42;font-weight:400;transform:scaleX(0.9964);transform-origin:0 0;">12 990 900.00 ₽</div>
<div class="t" style="left:1490.46px;top:588.22px;font-size:9.738px;line-height:9.738px;color:#3b3e42;font-weight:400;transform:scaleX(0.9964);transform-origin:0 0;">8 233.35%</div>
<div class="r" style="left:57px;top:605.8px;width:1489.00px;height:25.50px;background:#ffffff;"></div>
<div class="r" style="left:57px;top:605.3px;width:1489.00px;height:1.00px;background:#ededed;"></div>
<div class="r" style="left:376.0px;top:605.8px;width:1.00px;height:25.50px;background:#efefef;"></div>
<div class="r" style="left:522.19px;top:605.8px;width:1.00px;height:25.50px;background:#efefef;"></div>
<div class="r" style="left:668.38px;top:605.8px;width:1.00px;height:25.50px;background:#efefef;"></div>
<div class="r" style="left:814.5699999999999px;top:605.8px;width:1.00px;height:25.50px;background:#efefef;"></div>
<div class="r" style="left:960.76px;top:605.8px;width:1.00px;height:25.50px;background:#efefef;"></div>
<div class="r" style="left:1106.95px;top:605.8px;width:1.00px;height:25.50px;background:#efefef;"></div>
<div class="r" style="left:1253.1399999999999px;top:605.8px;width:1.00px;height:25.50px;background:#efefef;"></div>
<div class="r" style="left:1399.33px;top:605.8px;width:1.00px;height:25.50px;background:#efefef;"></div>
<svg class="r" style="left:71px;top:613px" width="12" height="12" viewBox="0 0 12 12"><g transform="translate(0.300 0.650)"><rect width="10" height="10" rx="1.6" fill="#cdbfb1"/><path d="M5 2.2v5.6M2.2 5h5.6" stroke="#fff" stroke-width="1.5"/></g></svg>
<div class="t" style="left:85.59px;top:614.22px;font-size:9.738px;line-height:9.738px;color:#3b3e42;font-weight:400;">organic</div>
<div class="t" style="left:485.29px;top:614.22px;font-size:9.738px;line-height:9.738px;color:#3b3e42;font-weight:400;transform:scaleX(0.9964);transform-origin:0 0;">0.00 ₽</div>
<div class="t" style="left:630.13px;top:614.22px;font-size:9.738px;line-height:9.738px;color:#3b3e42;font-weight:400;transform:scaleX(0.9964);transform-origin:0 0;">30 748</div>
<div class="t" style="left:789.78px;top:614.22px;font-size:9.738px;line-height:9.738px;color:#3b3e42;font-weight:400;transform:scaleX(0.9964);transform-origin:0 0;">675</div>
<div class="t" style="left:924.59px;top:614.22px;font-size:9.738px;line-height:9.738px;color:#3b3e42;font-weight:400;transform:scaleX(0.9964);transform-origin:0 0;">2.20%</div>
<div class="t" style="left:1070.05px;top:614.22px;font-size:9.738px;line-height:9.738px;color:#3b3e42;font-weight:400;transform:scaleX(0.9964);transform-origin:0 0;">0.00 ₽</div>
<div class="t" style="left:1228.40px;top:614.22px;font-size:9.738px;line-height:9.738px;color:#3b3e42;font-weight:400;transform:scaleX(0.9964);transform-origin:0 0;">179</div>
<div class="t" style="left:1332.77px;top:614.22px;font-size:9.738px;line-height:9.738px;color:#3b3e42;font-weight:400;transform:scaleX(0.9964);transform-origin:0 0;">415 299.00 ₽</div>
<div class="t" style="left:1509.33px;top:614.22px;font-size:9.738px;line-height:9.738px;color:#3b3e42;font-weight:400;transform:scaleX(0.9964);transform-origin:0 0;">0.00%</div>
<div class="r" style="left:57px;top:631.3px;width:1489.00px;height:25.60px;background:#ffffff;"></div>
<div class="r" style="left:57px;top:630.8px;width:1489.00px;height:1.00px;background:#ededed;"></div>
<div class="r" style="left:376.0px;top:631.3px;width:1.00px;height:25.60px;background:#efefef;"></div>
<div class="r" style="left:522.19px;top:631.3px;width:1.00px;height:25.60px;background:#efefef;"></div>
<div class="r" style="left:668.38px;top:631.3px;width:1.00px;height:25.60px;background:#efefef;"></div>
<div class="r" style="left:814.5699999999999px;top:631.3px;width:1.00px;height:25.60px;background:#efefef;"></div>
<div class="r" style="left:960.76px;top:631.3px;width:1.00px;height:25.60px;background:#efefef;"></div>
<div class="r" style="left:1106.95px;top:631.3px;width:1.00px;height:25.60px;background:#efefef;"></div>
<div class="r" style="left:1253.1399999999999px;top:631.3px;width:1.00px;height:25.60px;background:#efefef;"></div>
<div class="r" style="left:1399.33px;top:631.3px;width:1.00px;height:25.60px;background:#efefef;"></div>
<svg class="r" style="left:71px;top:639px" width="12" height="12" viewBox="0 0 12 12"><g transform="translate(0.300 0.200)"><rect width="10" height="10" rx="1.6" fill="#cdbfb1"/><path d="M5 2.2v5.6M2.2 5h5.6" stroke="#fff" stroke-width="1.5"/></g></svg>
<div class="t" style="left:85.34px;top:639.22px;font-size:9.738px;line-height:9.738px;color:#3b3e42;font-weight:400;">referral</div>
<div class="t" style="left:485.29px;top:639.22px;font-size:9.738px;line-height:9.738px;color:#3b3e42;font-weight:400;transform:scaleX(0.9964);transform-origin:0 0;">0.00 ₽</div>
<div class="t" style="left:643.56px;top:639.22px;font-size:9.738px;line-height:9.738px;color:#3b3e42;font-weight:400;transform:scaleX(0.9964);transform-origin:0 0;">940</div>
<div class="t" style="left:800.60px;top:639.22px;font-size:9.738px;line-height:9.738px;color:#3b3e42;font-weight:400;transform:scaleX(0.9964);transform-origin:0 0;">8</div>
<div class="t" style="left:924.59px;top:639.22px;font-size:9.738px;line-height:9.738px;color:#3b3e42;font-weight:400;transform:scaleX(0.9964);transform-origin:0 0;">0.85%</div>
<div class="t" style="left:1070.05px;top:639.22px;font-size:9.738px;line-height:9.738px;color:#3b3e42;font-weight:400;transform:scaleX(0.9964);transform-origin:0 0;">0.00 ₽</div>
<div class="t" style="left:1239.12px;top:639.22px;font-size:9.738px;line-height:9.738px;color:#3b3e42;font-weight:400;transform:scaleX(0.9964);transform-origin:0 0;">0</div>
<div class="t" style="left:1362.43px;top:639.22px;font-size:9.738px;line-height:9.738px;color:#3b3e42;font-weight:400;transform:scaleX(0.9964);transform-origin:0 0;">0.00 ₽</div>
<div class="t" style="left:1509.33px;top:639.22px;font-size:9.738px;line-height:9.738px;color:#3b3e42;font-weight:400;transform:scaleX(0.9964);transform-origin:0 0;">0.00%</div>
<div class="r" style="left:57px;top:656.9px;width:1489.00px;height:25.50px;background:#ffffff;"></div>
<div class="r" style="left:57px;top:656.4px;width:1489.00px;height:1.00px;background:#ededed;"></div>
<div class="r" style="left:376.0px;top:656.9px;width:1.00px;height:25.50px;background:#efefef;"></div>
<div class="r" style="left:522.19px;top:656.9px;width:1.00px;height:25.50px;background:#efefef;"></div>
<div class="r" style="left:668.38px;top:656.9px;width:1.00px;height:25.50px;background:#efefef;"></div>
<div class="r" style="left:814.5699999999999px;top:656.9px;width:1.00px;height:25.50px;background:#efefef;"></div>
<div class="r" style="left:960.76px;top:656.9px;width:1.00px;height:25.50px;background:#efefef;"></div>
<div class="r" style="left:1106.95px;top:656.9px;width:1.00px;height:25.50px;background:#efefef;"></div>
<div class="r" style="left:1253.1399999999999px;top:656.9px;width:1.00px;height:25.50px;background:#efefef;"></div>
<div class="r" style="left:1399.33px;top:656.9px;width:1.00px;height:25.50px;background:#efefef;"></div>
<svg class="r" style="left:71px;top:664px" width="12" height="12" viewBox="0 0 12 12"><g transform="translate(0.300 0.750)"><rect width="10" height="10" rx="1.6" fill="#cdbfb1"/><path d="M5 2.2v5.6M2.2 5h5.6" stroke="#fff" stroke-width="1.5"/></g></svg>
<div class="t" style="left:85.51px;top:665.22px;font-size:9.738px;line-height:9.738px;color:#3b3e42;font-weight:400;">Статические номера</div>
<div class="t" style="left:485.29px;top:665.22px;font-size:9.738px;line-height:9.738px;color:#3b3e42;font-weight:400;transform:scaleX(0.9964);transform-origin:0 0;">0.00 ₽</div>
<div class="t" style="left:654.36px;top:665.22px;font-size:9.738px;line-height:9.738px;color:#3b3e42;font-weight:400;transform:scaleX(0.9964);transform-origin:0 0;">0</div>
<div class="t" style="left:782.38px;top:665.22px;font-size:9.738px;line-height:9.738px;color:#3b3e42;font-weight:400;transform:scaleX(0.9964);transform-origin:0 0;">4 110</div>
<div class="t" style="left:924.59px;top:665.22px;font-size:9.738px;line-height:9.738px;color:#3b3e42;font-weight:400;transform:scaleX(0.9964);transform-origin:0 0;">0.00%</div>
<div class="t" style="left:1070.05px;top:665.22px;font-size:9.738px;line-height:9.738px;color:#3b3e42;font-weight:400;transform:scaleX(0.9964);transform-origin:0 0;">0.00 ₽</div>
<div class="t" style="left:1233.85px;top:665.22px;font-size:9.738px;line-height:9.738px;color:#3b3e42;font-weight:400;transform:scaleX(0.9964);transform-origin:0 0;">47</div>
<div class="t" style="left:1362.43px;top:665.22px;font-size:9.738px;line-height:9.738px;color:#3b3e42;font-weight:400;transform:scaleX(0.9964);transform-origin:0 0;">0.00 ₽</div>
<div class="t" style="left:1509.33px;top:665.22px;font-size:9.738px;line-height:9.738px;color:#3b3e42;font-weight:400;transform:scaleX(0.9964);transform-origin:0 0;">0.00%</div>
<div class="r" style="left:57px;top:682.4px;width:1489.00px;height:25.50px;background:#ffffff;"></div>
<div class="r" style="left:57px;top:681.9px;width:1489.00px;height:1.00px;background:#ededed;"></div>
<div class="r" style="left:376.0px;top:682.4px;width:1.00px;height:25.50px;background:#efefef;"></div>
<div class="r" style="left:522.19px;top:682.4px;width:1.00px;height:25.50px;background:#efefef;"></div>
<div class="r" style="left:668.38px;top:682.4px;width:1.00px;height:25.50px;background:#efefef;"></div>
<div class="r" style="left:814.5699999999999px;top:682.4px;width:1.00px;height:25.50px;background:#efefef;"></div>
<div class="r" style="left:960.76px;top:682.4px;width:1.00px;height:25.50px;background:#efefef;"></div>
<div class="r" style="left:1106.95px;top:682.4px;width:1.00px;height:25.50px;background:#efefef;"></div>
<div class="r" style="left:1253.1399999999999px;top:682.4px;width:1.00px;height:25.50px;background:#efefef;"></div>
<div class="r" style="left:1399.33px;top:682.4px;width:1.00px;height:25.50px;background:#efefef;"></div>
<svg class="r" style="left:71px;top:690px" width="12" height="12" viewBox="0 0 12 12"><g transform="translate(0.300 0.250)"><rect width="10" height="10" rx="1.6" fill="#cdbfb1"/><path d="M5 2.2v5.6M2.2 5h5.6" stroke="#fff" stroke-width="1.5"/></g></svg>
<div class="t" style="left:85.39px;top:690.22px;font-size:9.738px;line-height:9.738px;color:#3b3e42;font-weight:400;">(none)</div>
<div class="t" style="left:485.29px;top:690.22px;font-size:9.738px;line-height:9.738px;color:#3b3e42;font-weight:400;transform:scaleX(0.9964);transform-origin:0 0;">0.00 ₽</div>
<div class="t" style="left:630.08px;top:690.22px;font-size:9.738px;line-height:9.738px;color:#3b3e42;font-weight:400;transform:scaleX(0.9964);transform-origin:0 0;">22 160</div>
<div class="t" style="left:789.80px;top:690.22px;font-size:9.738px;line-height:9.738px;color:#3b3e42;font-weight:400;transform:scaleX(0.9964);transform-origin:0 0;">348</div>
<div class="t" style="left:924.59px;top:690.22px;font-size:9.738px;line-height:9.738px;color:#3b3e42;font-weight:400;transform:scaleX(0.9964);transform-origin:0 0;">1.57%</div>
<div class="t" style="left:1070.05px;top:690.22px;font-size:9.738px;line-height:9.738px;color:#3b3e42;font-weight:400;transform:scaleX(0.9964);transform-origin:0 0;">0.00 ₽</div>
<div class="t" style="left:1233.83px;top:690.22px;font-size:9.738px;line-height:9.738px;color:#3b3e42;font-weight:400;transform:scaleX(0.9964);transform-origin:0 0;">81</div>
<div class="t" style="left:1332.77px;top:690.22px;font-size:9.738px;line-height:9.738px;color:#3b3e42;font-weight:400;transform:scaleX(0.9964);transform-origin:0 0;">228 041.00 ₽</div>
<div class="t" style="left:1509.33px;top:690.22px;font-size:9.738px;line-height:9.738px;color:#3b3e42;font-weight:400;transform:scaleX(0.9964);transform-origin:0 0;">0.00%</div>
<div class="r" style="left:57px;top:707.9px;width:1489.00px;height:27.30px;background:#f5f3ef;"></div>
<div class="r" style="left:57px;top:707.4px;width:1489.00px;height:1.00px;background:#ededed;"></div>
<div class="r" style="left:376.0px;top:707.9px;width:1.00px;height:27.30px;background:#efefef;"></div>
<div class="r" style="left:522.19px;top:707.9px;width:1.00px;height:27.30px;background:#efefef;"></div>
<div class="r" style="left:668.38px;top:707.9px;width:1.00px;height:27.30px;background:#efefef;"></div>
<div class="r" style="left:814.5699999999999px;top:707.9px;width:1.00px;height:27.30px;background:#efefef;"></div>
<div class="r" style="left:960.76px;top:707.9px;width:1.00px;height:27.30px;background:#efefef;"></div>
<div class="r" style="left:1106.95px;top:707.9px;width:1.00px;height:27.30px;background:#efefef;"></div>
<div class="r" style="left:1253.1399999999999px;top:707.9px;width:1.00px;height:27.30px;background:#efefef;"></div>
<div class="r" style="left:1399.33px;top:707.9px;width:1.00px;height:27.30px;background:#efefef;"></div>
<div class="t" style="left:69.51px;top:717.22px;font-size:9.738px;line-height:9.738px;color:#2b2f33;font-weight:400;transform:scaleX(1.1101);transform-origin:0 0;-webkit-text-stroke:0.35px #2b2f33;">Итого</div>
<div class="t" style="left:454.62px;top:717.22px;font-size:9.738px;line-height:9.738px;color:#2b2f33;font-weight:400;transform:scaleX(1.0086);transform-origin:0 0;-webkit-text-stroke:0.35px #2b2f33;">490 913.33 ₽</div>
<div class="t" style="left:629.42px;top:717.22px;font-size:9.738px;line-height:9.738px;color:#2b2f33;font-weight:400;transform:scaleX(1.0086);transform-origin:0 0;-webkit-text-stroke:0.35px #2b2f33;">60 330</div>
<div class="t" style="left:781.08px;top:717.22px;font-size:9.738px;line-height:9.738px;color:#2b2f33;font-weight:400;transform:scaleX(1.0086);transform-origin:0 0;-webkit-text-stroke:0.35px #2b2f33;">5 865</div>
<div class="t" style="left:923.96px;top:717.22px;font-size:9.738px;line-height:9.738px;color:#2b2f33;font-weight:400;transform:scaleX(1.0086);transform-origin:0 0;-webkit-text-stroke:0.35px #2b2f33;">9.72%</div>
<div class="t" style="left:1063.96px;top:717.22px;font-size:9.738px;line-height:9.738px;color:#2b2f33;font-weight:400;transform:scaleX(1.0086);transform-origin:0 0;-webkit-text-stroke:0.35px #2b2f33;">83.70 ₽</div>
<div class="t" style="left:1227.88px;top:717.22px;font-size:9.738px;line-height:9.738px;color:#2b2f33;font-weight:400;transform:scaleX(1.0086);transform-origin:0 0;-webkit-text-stroke:0.35px #2b2f33;">383</div>
<div class="t" style="left:1318.11px;top:717.22px;font-size:9.738px;line-height:9.738px;color:#2b2f33;font-weight:400;transform:scaleX(1.0086);transform-origin:0 0;-webkit-text-stroke:0.35px #2b2f33;">14 419 410.00 ₽</div>
<div class="t" style="left:1489.59px;top:717.22px;font-size:9.738px;line-height:9.738px;color:#2b2f33;font-weight:400;transform:scaleX(1.0086);transform-origin:0 0;-webkit-text-stroke:0.35px #2b2f33;">2 837.26%</div>
<svg class="r" style="left:444px;top:525px" width="13" height="9" viewBox="0 0 13 9"><g transform="translate(0.000 0.500)"><path d="M0.1 0h11.4L5.8 6.4z" fill="#3eadcf"/></g></svg>
</body></html>
